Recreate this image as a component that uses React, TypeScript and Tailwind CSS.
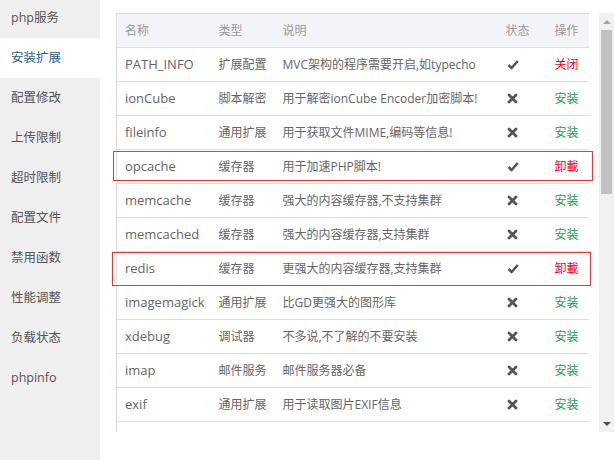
const menu = [
  "php服务",
  "安装扩展",
  "配置修改",
  "上传限制",
  "超时限制",
  "配置文件",
  "禁用函数",
  "性能调整",
  "负载状态",
  "phpinfo",
]

type Ext = {
  name: string
  type: string
  desc: string
  on: boolean
  action: string
}

const extensions: Ext[] = [
  { name: "PATH_INFO", type: "扩展配置", desc: "MVC架构的程序需要开启,如typecho", on: true, action: "关闭" },
  { name: "ionCube", type: "脚本解密", desc: "用于解密ionCube Encoder加密脚本!", on: false, action: "安装" },
  { name: "fileinfo", type: "通用扩展", desc: "用于获取文件MIME,编码等信息!", on: false, action: "安装" },
  { name: "opcache", type: "缓存器", desc: "用于加速PHP脚本!", on: true, action: "卸載" },
  { name: "memcache", type: "缓存器", desc: "强大的内容缓存器,不支持集群", on: false, action: "安装" },
  { name: "memcached", type: "缓存器", desc: "强大的内容缓存器,支持集群", on: false, action: "安装" },
  { name: "redis", type: "缓存器", desc: "更强大的内容缓存器,支持集群", on: true, action: "卸載" },
  { name: "imagemagick", type: "通用扩展", desc: "比GD更强大的图形库", on: false, action: "安装" },
  { name: "xdebug", type: "调试器", desc: "不多说,不了解的不要安装", on: false, action: "安装" },
  { name: "imap", type: "邮件服务", desc: "邮件服务器必备", on: false, action: "安装" },
  { name: "exif", type: "通用扩展", desc: "用于读取图片EXIF信息", on: false, action: "安装" },
]

export default function App() {
  return (
    <div className="flex h-[460px] w-[614px] overflow-hidden bg-white font-['Open_Sans','Noto_Sans_CJK_SC',sans-serif] text-[12px]">
      <aside className="w-[100px] shrink-0 bg-[#efefef]">
        <ul className="-mt-[2px]">
          {menu.map((item) => (
            <li
              key={item}
              className={
                item === "安装扩展"
                  ? "h-[40px] bg-white pl-[11px] text-[12.5px] leading-[40px] text-[#2b5e95]"
                  : "h-[40px] pl-[11px] text-[12.5px] leading-[40px] text-[#555]"
              }
            >
              {item}
            </li>
          ))}
        </ul>
      </aside>

      <main className="flex-1 pt-[13px] pl-4">
        <div className="relative flex h-[419px]">
          <div className="h-full w-[473px] overflow-hidden">
            <table className="w-[473px] table-fixed border-collapse border border-[#ddd] text-left">
              <colgroup>
                <col className="w-[94px]" />
                <col className="w-[64px]" />
                <col className="w-[223px]" />
                <col className="w-[49px]" />
                <col className="w-[43px]" />
              </colgroup>
              <thead>
                <tr className="h-[34px] bg-[#f3f4f8] text-[#999]">
                  <th className="pl-[8px] font-normal">名称</th>
                  <th className="pl-[8px] font-normal">类型</th>
                  <th className="pl-[8px] font-normal">说明</th>
                  <th className="pl-[8px] font-normal">状态</th>
                  <th className="pl-[8px] font-normal">操作</th>
                </tr>
              </thead>
              <tbody>
                {extensions.map((ext) => (
                  <tr key={ext.name} className="h-[34px] border-t border-[#ddd] text-[#666]">
                    <td className="pl-[8px] text-[13px] whitespace-nowrap">{ext.name}</td>
                    <td className="pl-[8px] whitespace-nowrap">{ext.type}</td>
                    <td className="pl-[8px] whitespace-nowrap">{ext.desc}</td>
                    <td className="pl-[9px]">{ext.on ? <CheckIcon /> : <CrossIcon />}</td>
                    <td
                      className={
                        ext.on
                          ? "pl-[8px] text-[#ff0000]"
                          : "pl-[8px] text-[#20a53a]"
                      }
                    >
                      {ext.action}
                    </td>
                  </tr>
                ))}
                {/* next row, scrolled out of view */}
                <tr className="h-[34px] border-t border-[#ddd]">
                  <td colSpan={5} />
                </tr>
              </tbody>
            </table>
          </div>

          <div className="ml-[10px] flex w-[15px] flex-col bg-[#f1f1f1]">
            <div className="flex h-[17px] items-center justify-center">
              <span className="h-0 w-0 border-x-[4px] border-b-[4px] border-x-transparent border-b-[#a3a3a3]" />
            </div>
            <div className="ml-[2px] h-[164px] w-[11px] bg-[#c1c1c1]" />
            <div className="flex-1" />
            <div className="flex h-[17px] items-center justify-center">
              <span className="h-0 w-0 border-x-[4px] border-t-[4px] border-x-transparent border-t-[#505050]" />
            </div>
          </div>

          {/* annotation boxes */}
          <div className="absolute top-[138px] left-[-3px] h-[30px] w-[480px] border border-[#e53935]" />
          <div className="absolute top-[239px] left-[-4px] h-[34px] w-[479px] border border-[#e53935]" />
        </div>
      </main>
    </div>
  )
}

function CheckIcon() {
  return (
    <svg className="h-[11px] w-[12px]" viewBox="0 0 12 11" aria-hidden="true">
      <path d="M1.5 6 L4.6 9 L10.8 2" fill="none" stroke="#555" strokeWidth={2.6} strokeLinejoin="round" />
    </svg>
  )
}

function CrossIcon() {
  return (
    <svg className="h-[11px] w-[11px]" viewBox="0 0 11 11" aria-hidden="true">
      <path d="M2 2 L9 9 M9 2 L2 9" fill="none" stroke="#555" strokeWidth={2.8} strokeLinecap="round" />
    </svg>
  )
}
